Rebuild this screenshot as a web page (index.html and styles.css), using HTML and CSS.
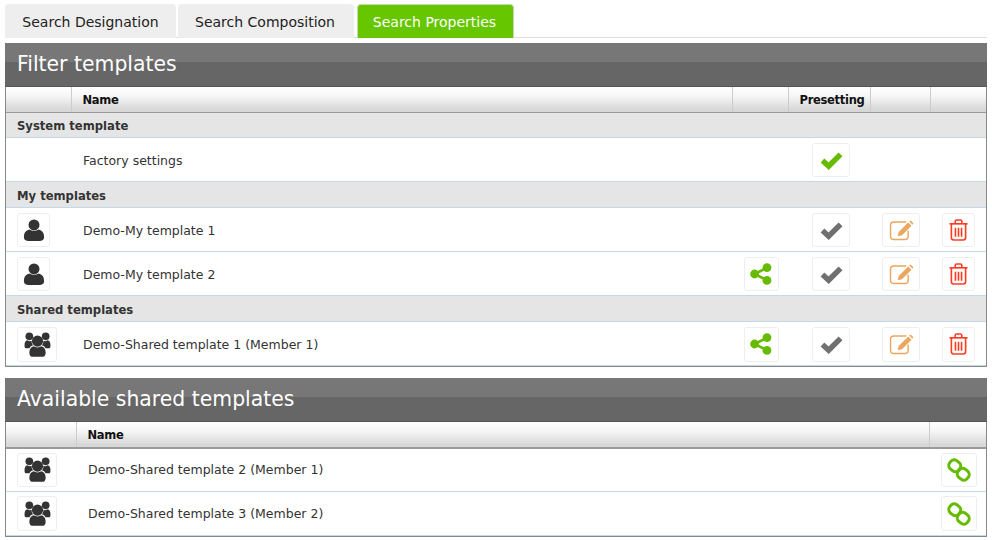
FILE: index.html
```html
<!DOCTYPE html>
<html lang="en">

<head>
    <meta charset="UTF-8">
    <meta name="viewport" content="width=device-width, initial-scale=1.0">
    <title>Filter templates</title>
    <link rel="stylesheet" href="styles.css">
</head>

<body>

    <!-- Icon sprites -->
    <svg class="sprites" width="0" height="0">
        <symbol id="i-check" viewBox="0 0 24 20">
            <path d="M2.5 10 L9 16 L21.500 3.500" fill="none" stroke="currentColor" stroke-width="5.800" stroke-linejoin="miter"/>
        </symbol>
        <symbol id="i-user" viewBox="0 0 24 24">
            <circle cx="12" cy="6.500" r="6"/>
            <path d="M1 20 C1 15 3 12.500 7 11.500 C10 13.500 14 13.500 17 11.500 C21 12.500 23 15 23 20 C23 23 21 24 18 24 L6 24 C3 24 1 23 1 20 Z"/>
        </symbol>
        <symbol id="i-group" viewBox="0 0 28 26">
            <circle cx="14" cy="9.500" r="5.800"/>
            <circle cx="5.500" cy="4.500" r="4"/>
            <circle cx="22.500" cy="4.500" r="4"/>
            <path d="M0.500 14 C0.500 10.500 1.500 9 3.500 8.700 C5 9.800 6.800 9.800 7.800 9.200 C7.800 11 8.300 12.500 9.400 13.700 C7.800 14.200 6.200 15.200 5.700 17 L2.500 17 C1 17 0.500 16 0.500 14 Z"/>
            <path d="M27.500 14 C27.500 10.500 26.500 9 24.500 8.700 C23 9.800 21.200 9.800 20.200 9.200 C20.200 11 19.700 12.500 18.600 13.700 C20.200 14.200 21.800 15.200 22.300 17 L25.500 17 C27 17 27.500 16 27.500 14 Z"/>
            <path d="M5.500 21.500 C5.500 17.500 7.500 15.500 10 14.800 C12.300 16.400 15.700 16.400 18 14.800 C20.500 15.500 22.500 17.500 22.500 21.500 C22.500 24.500 21 25.800 18.500 25.800 L9.500 25.800 C7 25.800 5.500 24.500 5.500 21.500 Z"/>
        </symbol>
        <symbol id="i-share" viewBox="0 0 24 24">
            <path d="M19 5 L5 12 L19 19" fill="none" stroke="currentColor" stroke-width="2.800"/>
            <circle cx="18.500" cy="5" r="4.800"/>
            <circle cx="5" cy="12" r="4.800"/>
            <circle cx="18.500" cy="19" r="4.800"/>
        </symbol>
        <symbol id="i-edit" viewBox="0 0 26 22">
            <path d="M18 2 L5 2 Q1.500 2 1.500 5.500 L1.500 17 Q1.500 20.500 5 20.500 L16.500 20.500 Q20 20.500 20 17 L20 11" fill="none" stroke="currentColor" stroke-width="1.500"/>
            <path d="M9 17 L10 12.500 L20 2.500 L23.500 6 L13.500 16 Z"/>
            <path d="M21 1.500 L22.500 0.500 L25.500 3.500 L24.500 5 Z"/>
        </symbol>
        <symbol id="i-trash" viewBox="0 0 20 23">
            <g fill="none" stroke="currentColor" stroke-width="1.700">
                <path d="M0.500 5 L19.500 5"/>
                <path d="M6.500 5 L6.500 2.500 Q6.500 1 8 1 L12 1 Q13.500 1 13.500 2.500 L13.500 5"/>
                <path d="M2.500 5 L2.500 19.500 Q2.500 22 5 22 L15 22 Q17.500 22 17.500 19.500 L17.500 5"/>
                <path d="M6.800 9 L6.800 18.500 M10 9 L10 18.500 M13.200 9 L13.200 18.500"/>
            </g>
        </symbol>
        <symbol id="i-link" viewBox="0 0 24 24">
            <g fill="none" stroke="currentColor" stroke-width="3">
                <rect x="2" y="2.500" width="11.500" height="10.500" rx="4.500" transform="rotate(42 7.750 7.750)"/>
                <rect x="10.500" y="11" width="11.500" height="10.500" rx="4.500" transform="rotate(42 16.250 16.250)"/>
            </g>
        </symbol>
    </svg>

    <!-- Tabs -->
    <div class="tabs">
        <a class="tab tab-one">Search Designation</a>
        <a class="tab tab-two">Search Composition</a>
        <a class="tab tab-active">Search Properties</a>
    </div>

    <!-- Filter templates -->
    <div class="panel">
        <h2 class="panel-title">Filter templates</h2>
        <table class="grid">
            <colgroup>
                <col class="col-icon">
                <col>
                <col class="col-share">
                <col class="col-preset">
                <col class="col-edit">
                <col class="col-trash">
            </colgroup>
            <thead>
                <tr>
                    <th></th>
                    <th class="name">Name</th>
                    <th></th>
                    <th class="preset">Presetting</th>
                    <th></th>
                    <th></th>
                </tr>
            </thead>
            <tbody>
                <tr class="group">
                    <td colspan="6">System template</td>
                </tr>
                <tr>
                    <td></td>
                    <td class="name">Factory settings</td>
                    <td></td>
                    <td class="act"><span class="btn btn-check green"><svg><use href="#i-check"/></svg></span></td>
                    <td></td>
                    <td></td>
                </tr>
                <tr class="group group-tall">
                    <td colspan="6">My templates</td>
                </tr>
                <tr>
                    <td class="who"><span class="btn btn-user"><svg><use href="#i-user"/></svg></span></td>
                    <td class="name">Demo-My template 1</td>
                    <td></td>
                    <td class="act"><span class="btn btn-check grey"><svg><use href="#i-check"/></svg></span></td>
                    <td class="act"><span class="btn btn-edit orange"><svg><use href="#i-edit"/></svg></span></td>
                    <td class="act"><span class="btn btn-trash red"><svg><use href="#i-trash"/></svg></span></td>
                </tr>
                <tr>
                    <td class="who"><span class="btn btn-user"><svg><use href="#i-user"/></svg></span></td>
                    <td class="name">Demo-My template 2</td>
                    <td class="act"><span class="btn btn-share green"><svg><use href="#i-share"/></svg></span></td>
                    <td class="act"><span class="btn btn-check grey"><svg><use href="#i-check"/></svg></span></td>
                    <td class="act"><span class="btn btn-edit orange"><svg><use href="#i-edit"/></svg></span></td>
                    <td class="act"><span class="btn btn-trash red"><svg><use href="#i-trash"/></svg></span></td>
                </tr>
                <tr class="group group-tall">
                    <td colspan="6">Shared templates</td>
                </tr>
                <tr class="row-tall">
                    <td class="who"><span class="btn btn-group"><svg><use href="#i-group"/></svg></span></td>
                    <td class="name">Demo-Shared template 1 (Member 1)</td>
                    <td class="act"><span class="btn btn-share green"><svg><use href="#i-share"/></svg></span></td>
                    <td class="act"><span class="btn btn-check grey"><svg><use href="#i-check"/></svg></span></td>
                    <td class="act"><span class="btn btn-edit orange"><svg><use href="#i-edit"/></svg></span></td>
                    <td class="act"><span class="btn btn-trash red"><svg><use href="#i-trash"/></svg></span></td>
                </tr>
            </tbody>
        </table>
    </div>

    <!-- Available shared templates -->
    <div class="panel panel-shared">
        <h2 class="panel-title">Available shared templates</h2>
        <table class="grid grid-shared">
            <colgroup>
                <col class="col-icon-wide">
                <col>
                <col class="col-link">
            </colgroup>
            <thead>
                <tr>
                    <th></th>
                    <th class="name">Name</th>
                    <th></th>
                </tr>
            </thead>
            <tbody>
                <tr>
                    <td class="who"><span class="btn btn-group"><svg><use href="#i-group"/></svg></span></td>
                    <td class="name">Demo-Shared template 2 (Member 1)</td>
                    <td class="act"><span class="btn btn-link green"><svg><use href="#i-link"/></svg></span></td>
                </tr>
                <tr class="row-tall">
                    <td class="who"><span class="btn btn-group"><svg><use href="#i-group"/></svg></span></td>
                    <td class="name">Demo-Shared template 3 (Member 2)</td>
                    <td class="act"><span class="btn btn-link green"><svg><use href="#i-link"/></svg></span></td>
                </tr>
            </tbody>
        </table>
    </div>

</body>

</html>
```

FILE: styles.css
```css
body {
    font-family: 'DejaVu Sans', Verdana, sans-serif;
    font-size: 12.5px;
    color: #333;
    background-color: #fff;
    margin: 0;
    padding: 4px 5px 0;
}

.sprites {
    display: block;
    height: 0;
}

/* Tabs */
.tabs {
    display: flex;
    height: 33px;
    border-bottom: 1px solid #ddd;
    gap: 2px;
}

.tab {
    height: 34px;
    line-height: 36px;
    font-size: 14px;
    color: #222;
    background-color: #eee;
    border-radius: 4px 4px 0 0;
    box-sizing: border-box;
    text-align: center;
}

.tab-one {
    width: 171px;
}

.tab-two {
    width: 176px;
    padding-right: 2px;
}

.tab-active {
    width: 157px;
    margin-left: 1px;
    padding-right: 2px;
    color: #fff;
    background-color: #66c600;
    border: 1px solid #c5d8b0;
    border-bottom: none;
    line-height: 34px;
}

/* Panels */
.panel {
    margin-top: 5px;
    border: 1px solid #888;
    border-top: none;
    width: 980px;
}

.panel-shared {
    margin-top: 11px;
}

.panel-title {
    margin: 0 -1px;
    height: 44px;
    line-height: 43px;
    padding-left: 12px;
    font-size: 20.400px;
    font-weight: normal;
    color: #fff;
    background: linear-gradient(#777 0, #777 19px, #666 19px, #666 100%);
    border-bottom: 1px solid #555;
    box-sizing: border-box;
}

/* Tables */
.grid {
    width: 100%;
    border-collapse: collapse;
    table-layout: fixed;
}

.col-icon {
    width: 65px;
}

.col-share {
    width: 56px;
}

.col-preset {
    width: 82px;
}

.col-edit {
    width: 60px;
}

.col-trash {
    width: 56px;
}

.col-icon-wide {
    width: 70px;
}

.col-link {
    width: 57px;
}

.grid th {
    height: 25px;
    padding: 1px 0 0;
    box-sizing: border-box;
    font-size: 11.500px;
    letter-spacing: -0.300px;
    text-align: left;
    color: #111;
    background: linear-gradient(#fff 0, #f6f6f6 35%, #d8d8d8 90%);
    border-right: 1px solid #ccc;
    border-bottom: 1px solid #999;
}

.grid th:last-child {
    border-right: none;
}

.grid th.preset {
    padding-left: 6px;
    text-align: center;
}

.grid-shared th {
    height: 26px;
    border-bottom: 2px solid #999;
}

.grid td {
    height: 44px;
    padding: 2px 0 0;
    box-sizing: border-box;
    border-bottom: 1px solid #c3d9ea;
}

.grid th.name {
    padding-left: 11px;
}

.grid td.name {
    padding: 3px 0 0 12px;
}

.grid .who {
    padding-left: 11px;
}

.grid .act {
    text-align: center;
}

.grid .group td {
    height: 25px;
    padding: 3px 0 0 11px;
    font-size: 11.600px;
    font-weight: bold;
    background-color: #e5e5e5;
}

.grid .group-tall td {
    height: 26px;
}

.grid-shared td,
.grid-shared td.name {
    padding-top: 0;
}

/* Icon buttons */
.btn {
    display: inline-flex;
    align-items: center;
    justify-content: center;
    vertical-align: middle;
    box-sizing: border-box;
    height: 34px;
    background-color: #fff;
    border: 1px solid #eee;
    border-radius: 3px;
}

.row-tall .btn {
    height: 35px;
}

.btn svg {
    display: block;
    fill: currentColor;
}

.btn-check {
    width: 38px;
    margin-left: 4px;
}

.btn-check svg {
    width: 23px;
    height: 19px;
}

.btn-user {
    width: 33px;
    color: #333;
}

.btn-user svg {
    width: 22px;
    height: 22px;
}

.btn-group {
    width: 40px;
    color: #333;
}

.btn-group svg {
    width: 27px;
    height: 25px;
}

.btn-share {
    width: 35px;
    margin-left: 2px;
}

.btn-share svg {
    width: 22px;
    height: 22px;
}

.btn-edit {
    width: 38px;
    margin-left: 2px;
}

.btn-edit svg {
    width: 25px;
    height: 21px;
}

.btn-trash {
    width: 33px;
}

.btn-trash svg {
    width: 19px;
    height: 22px;
}

.btn-link {
    width: 36px;
    margin-left: 2px;
}

.btn-link svg {
    width: 24px;
    height: 24px;
}

.green {
    color: #66bb00;
}

.grey {
    color: #707070;
}

.orange {
    color: #eba75f;
}

.red {
    color: #ff3c20;
}
```
